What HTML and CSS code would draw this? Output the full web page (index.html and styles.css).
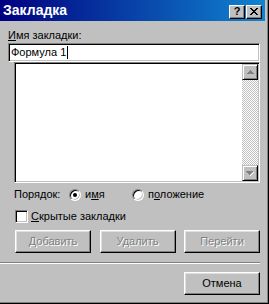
FILE: index.html
```html
<!DOCTYPE html>
<html lang="ru">
<head>
<meta charset="utf-8">
<link rel="stylesheet" href="styles.css">
</head>
<body>
<div class="window">
  <div class="titlebar">
    <span class="title">Закладка</span>
    <div class="tbtns">
      <span class="tbtn help">?</span>
      <span class="tbtn close"><svg width="8" height="7" viewBox="0 0 8 7"><path d="M0 0h2v1h1v1h2v-1h1v-1h2v1h-1v1h-1v1h-1v1h1v1h1v1h1v1h-2v-1h-1v-1h-2v1h-1v1h-2v-1h1v-1h1v-1h1v-1h-1v-1h-1v-1h-1z" fill="#000"/></svg></span>
    </div>
  </div>
  <div class="content">
    <div class="label"><u>И</u>мя закладки:</div>
    <div class="edit">Формула 1<span class="caret"></span></div>
    <div class="list">
      <div class="scroll">
        <div class="sbtn"><svg width="7" height="5" viewBox="0 0 7 5"><path d="M4 1h1v1h1v1h1v1h-4z" fill="#fff"/><path d="M3 0h1v1h1v1h1v1h1v1h-7v-1h1v-1h1v-1h1z" fill="#808080"/></svg></div>
        <div class="track"></div>
        <div class="sbtn"><svg width="8" height="5" viewBox="0 0 8 5"><path d="M7 1h1v1h-1v1h-1v1h-1v1h-1v-1h1v-1h1v-1h1z" fill="#fff"/><path d="M0 0h7v1h-1v1h-1v1h-1v1h-1v-1h-1v-1h-1v-1h-1z" fill="#808080"/></svg></div>
      </div>
    </div>
    <div class="order">
      <span class="order-label">Порядок:</span>
      <span class="opt first"><span class="radio checked"></span><span>и<u>м</u>я</span></span>
      <span class="opt"><span class="radio"></span><span>п<u>о</u>ложение</span></span>
    </div>
    <div class="checkrow">
      <span class="checkbox"></span><span><u>С</u>крытые закладки</span>
    </div>
    <div class="btnrow">
      <span class="btn disabled">Добавить</span>
      <span class="btn disabled">Удалить</span>
      <span class="btn disabled">Перейти</span>
    </div>
    <div class="sep"></div>
    <div class="btnrow end">
      <span class="btn">Отмена</span>
    </div>
  </div>
</div>
</body>
</html>
```
FILE: styles.css
```css
* { box-sizing: border-box; }
html, body { margin: 0; padding: 0; background: #c0c0c0; }
body {
  font-family: "Liberation Sans", Arial, sans-serif;
  font-size: 11px;
  line-height: 13px;
  color: #000;
}
.window {
  width: 269px;
  height: 304px;
  background: #c0c0c0;
  border-right: 1px solid #000;
  border-bottom: 1px solid #000;
  box-shadow: inset -1px -1px #808080;
  padding: 0 3px 3px 0;
  display: flex;
  flex-direction: column;
  overflow: hidden;
}
.titlebar {
  height: 21px;
  flex: none;
  background: linear-gradient(to right, #000080, #1084d0);
  display: flex;
  align-items: flex-start;
  justify-content: space-between;
  padding: 0 3px 0 3px;
}
.title {
  color: #fff;
  font-weight: bold;
  font-size: 14px;
  line-height: 16px;
  margin-top: 2px;
}
.tbtns {
  display: flex;
  gap: 1px;
  margin-top: 5px;
}
.tbtn {
  width: 16px;
  height: 14px;
  background: #c0c0c0;
  border: 1px solid;
  border-color: #fff #000 #000 #fff;
  box-shadow: inset -1px -1px #808080;
  display: flex;
  align-items: center;
  justify-content: center;
}
.help {
  font-weight: bold;
  font-size: 11px;
  line-height: 11px;
  padding-bottom: 1px;
}
.close svg { display: block; margin-top: -1px; }
.content {
  flex: 1;
  display: flex;
  flex-direction: column;
}
.label {
  margin-top: 8px;
  height: 13px;
  padding-left: 8px;
}
u { text-decoration: underline; text-underline-offset: 1px; }
.edit {
  margin: 1px 5px 0 8px;
  height: 19px;
  background: #fff;
  border: 1px solid;
  border-color: #808080 #fff #fff #808080;
  box-shadow: inset 1px 1px #000, inset -1px -1px #c0c0c0;
  padding: 2px 0 0 2px;
  display: flex;
  align-items: flex-start;
}
.caret {
  width: 1px;
  height: 13px;
  background: #000;
  margin-left: 1px;
}
.list {
  margin: 0 5px 0 14px;
  height: 121px;
  background: #fff;
  border: 1px solid;
  border-color: #808080 #fff #fff #808080;
  box-shadow: inset 1px 1px #000, inset -1px -1px #c0c0c0;
  padding: 1px;
  display: flex;
  justify-content: flex-end;
}
.scroll {
  width: 16px;
  display: flex;
  flex-direction: column;
}
.sbtn {
  height: 16px;
  flex: none;
  background: #c0c0c0;
  border: 1px solid;
  border-color: #c0c0c0 #000 #000 #c0c0c0;
  box-shadow: inset 1px 1px #fff, inset -1px -1px #808080;
  display: flex;
  align-items: center;
  justify-content: center;
}
.sbtn svg { display: block; }
.track {
  flex: 1;
  background: repeating-conic-gradient(#fff 0 25%, #c0c0c0 0 50%);
  background-size: 2px 2px;
}
.order {
  margin-top: 5px;
  height: 13px;
  padding-left: 14px;
  display: flex;
  align-items: center;
}
.order-label { width: 55px; }
.opt { display: flex; align-items: center; gap: 4px; }
.opt.first { width: 63px; }
.radio {
  width: 12px;
  height: 12px;
  border-radius: 50%;
  background: #fff;
  border: 1px solid;
  border-color: #808080 #fff #fff #808080;
  box-shadow: inset 1px 1px #000, inset -1px -1px #c0c0c0;
  display: flex;
  align-items: center;
  justify-content: center;
}
.radio.checked::after {
  content: "";
  width: 4px;
  height: 4px;
  border-radius: 50%;
  background: #000;
}
.checkrow {
  margin-top: 9px;
  height: 13px;
  padding-left: 15px;
  display: flex;
  align-items: center;
  gap: 3px;
}
.checkbox {
  width: 13px;
  height: 13px;
  background: #fff;
  border: 1px solid;
  border-color: #808080 #fff #fff #808080;
  box-shadow: inset 1px 1px #000, inset -1px -1px #c0c0c0;
}
.btnrow {
  margin: 7px 5px 0 15px;
  height: 23px;
  display: flex;
  justify-content: space-between;
}
.btnrow.end {
  margin-top: 8px;
  justify-content: flex-end;
}
.btn {
  width: 76px;
  height: 23px;
  background: #c0c0c0;
  border: 1px solid;
  border-color: #fff #000 #000 #fff;
  box-shadow: inset -1px -1px #808080, inset 1px 1px #dfdfdf;
  display: flex;
  align-items: center;
  justify-content: center;
  padding-bottom: 1px;
}
.btn.disabled {
  color: #808080;
  text-shadow: 1px 1px #fff;
}
.sep {
  margin: 9px 5px 0 0;
  height: 2px;
  border-top: 1px solid #808080;
  border-bottom: 1px solid #fff;
}
```
